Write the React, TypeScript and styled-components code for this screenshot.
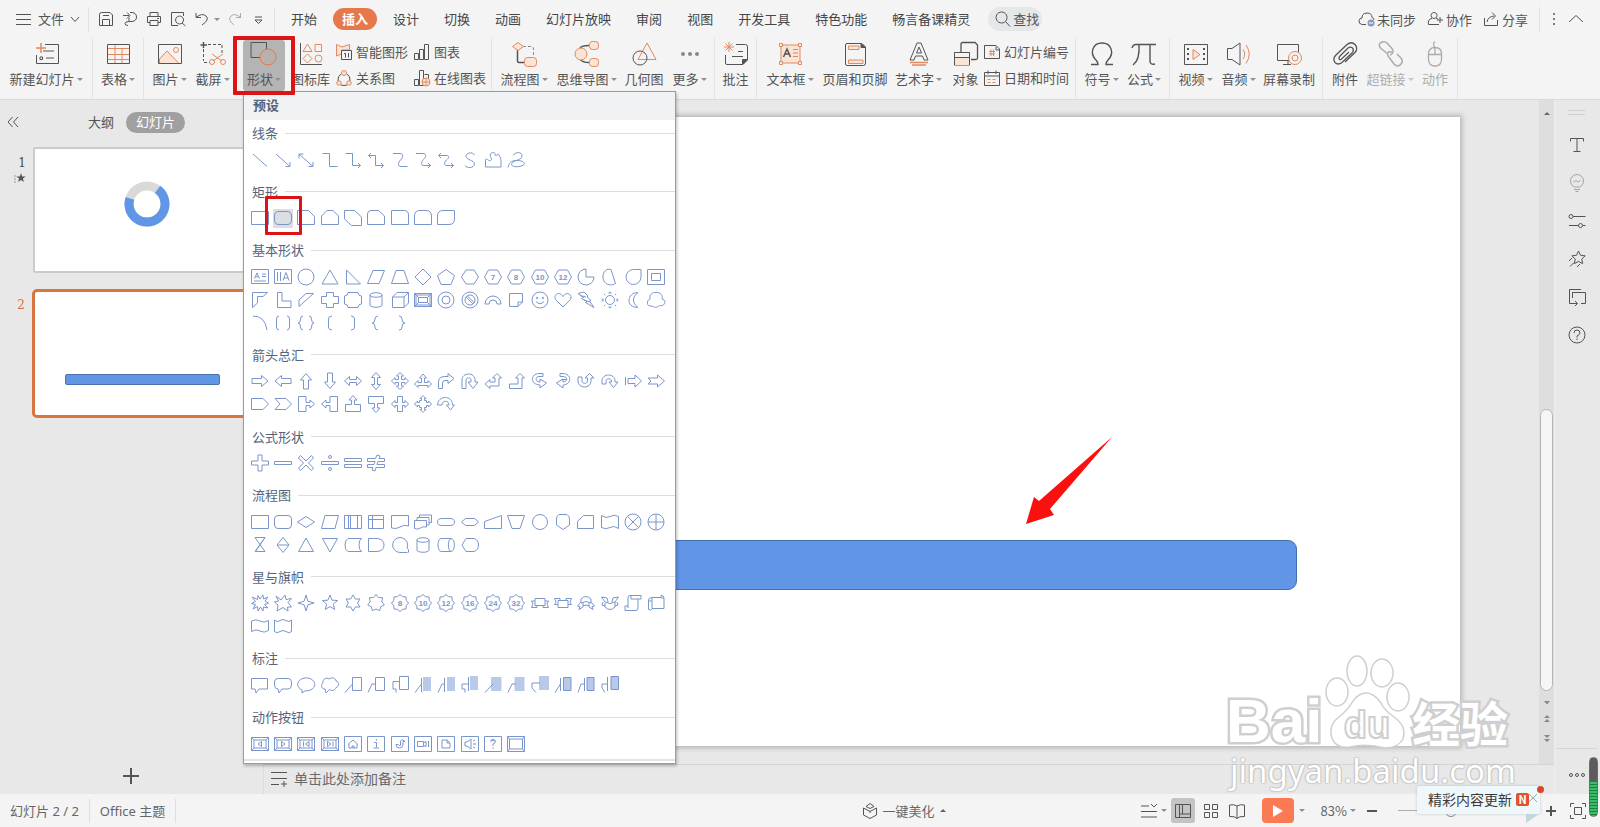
import React from 'react';
import styled, { createGlobalStyle, css } from 'styled-components';

const GlobalStyle = createGlobalStyle`
  * { box-sizing: border-box; }
  body { margin: 0; overflow: hidden; }
  body, button, input { font-family: "Noto Sans CJK SC", "Noto Sans", sans-serif; }
  button { border: 0; padding: 0; background: none; color: inherit; font-size: inherit; cursor: pointer; }
  h2, h3, p, ol { margin: 0; padding: 0; font-weight: 400; }
`;

const INK = '#545456';
const ORANGE = '#e2895f';
const PALE = '#fbe3d6';
const BLUE = '#7a96cc';
const RED = '#dc1418';

/* ---------- page frame ---------- */

const Page = styled.div`
  position: relative;
  display: flex;
  flex-direction: column;
  height: 100vh;
  font-size: 13px;
  line-height: 20px;
  color: ${INK};
  background: #e8e8e8;
`;

const Svg = styled.svg`
  display: block;
  flex: none;
  overflow: visible;
  fill: none;
  stroke: ${INK};
`;

const Caret = styled.span<{ $up?: boolean }>`
  flex: none;
  width: 0;
  height: 0;
  border: 3px solid transparent;
  ${(p) => (p.$up ? 'border-bottom-color: #666; border-top-width: 0;' : 'border-top-color: #909090; border-bottom-width: 0;')}
`;

/* ---------- menu bar ---------- */

const MenuBar = styled.header`
  display: flex;
  align-items: center;
  height: 38px;
  flex: none;
  background: #f4f4f4;
  white-space: nowrap;
`;

const FileButton = styled.button`
  display: flex;
  align-items: center;
  gap: 6px;
  padding: 0 8px 0 16px;
  line-height: 20px;
`;

const Rule = styled.span`
  width: 1px;
  height: 25px;
  flex: none;
  background: #e2e2e2;
`;

const QuickTools = styled.div`
  display: flex;
  align-items: center;
  gap: 8px;
  padding: 0 8px 0 9px;
`;

const QuickButton = styled.button`
  display: flex;
  align-items: center;
  gap: 4px;
`;

const Tabs = styled.nav`
  display: flex;
  align-items: center;
  gap: 7px;
  padding-left: 7px;
`;

const Tab = styled.button<{ $active?: boolean }>`
  height: 22px;
  padding: 0 9px;
  border-radius: 11px;
  line-height: 22px;
  color: #464648;
  ${(p) => p.$active && css`background: #e6794a; color: #fff; font-weight: 700;`}
`;

const Search = styled.label`
  display: flex;
  align-items: center;
  gap: 2px;
  width: 54px;
  height: 24px;
  margin-left: 9px;
  padding-left: 7px;
  border-radius: 12px;
  background: #e6e7e9;
`;

const SearchInput = styled.input`
  width: 30px;
  padding: 0;
  border: 0;
  background: none;
  font-size: 13px;
  line-height: 20px;
  &::placeholder { color: ${INK}; opacity: 1; }
`;

const AccountTools = styled.div`
  display: flex;
  align-items: center;
  gap: 11px;
  margin-left: auto;
  padding-right: 16px;
`;

const AccountButton = styled.button`
  display: flex;
  align-items: center;
  gap: 3px;
`;

/* ---------- ribbon ---------- */

const Ribbon = styled.section`
  display: flex;
  height: 62px;
  flex: none;
  background: #f4f4f4;
  border-bottom: 1px solid #dadada;
  white-space: nowrap;
`;

const Group = styled.div<{ $pad?: number }>`
  display: flex;
  height: 61px;
  padding: 2px ${(p) => p.$pad ?? 0}px 8px;
  border-right: 1px solid #e4e4e4;
`;

const ToolButton = styled.button<{ $w: number; $dim?: boolean }>`
  display: flex;
  flex-direction: column;
  align-items: center;
  flex: none;
  width: ${(p) => p.$w}px;
  height: 51px;
  padding-top: 1px;
  gap: 2px;
  opacity: ${(p) => (p.$dim ? 0.45 : 1)};
`;

const ToolLabel = styled.span`
  display: flex;
  align-items: center;
  gap: 2px;
  line-height: 20px;
`;

const ShapeAnchor = styled.div`
  position: relative;
  width: 42px;
  margin-left: 9px;
  border-radius: 3px;
  background: #b4b4b4;
  height: 51px;
`;

const Highlight = styled.span<{ $inset: string; $b: number }>`
  position: absolute;
  z-index: 6;
  inset: ${(p) => p.$inset};
  border: ${(p) => p.$b}px solid ${RED};
  border-radius: 1px;
  pointer-events: none;
`;

const SmallColumn = styled.div<{ $w: number }>`
  display: flex;
  flex-direction: column;
  gap: 6px;
  width: ${(p) => p.$w}px;
  padding-top: 2px;
`;

const SmallButton = styled.button`
  display: flex;
  align-items: center;
  gap: 4px;
  line-height: 20px;
`;

/* ---------- shape menu ---------- */

const ShapeMenu = styled.div`
  position: absolute;
  z-index: 5;
  top: 51px;
  left: 0;
  display: flex;
  flex-direction: column;
  width: 433px;
  height: 673px;
  border: 1px solid #9b9c9f;
  background: #fff;
  box-shadow: 1px 2px 3px rgba(0, 0, 0, 0.25);
  color: #56637c;
  cursor: default;
`;

const MenuTitle = styled.h2`
  height: 28px;
  padding-left: 9px;
  background: #f1f2f4;
  font-size: 13px;
  font-weight: 700;
  line-height: 25px;
`;

const SectionList = styled.div`
  display: flex;
  flex-direction: column;
  justify-content: space-between;
  flex: 1;
  padding-bottom: 4px;
  margin-bottom: 2px;
  border-bottom: 2px solid #e3e4e6;
`;

const SectionTitle = styled.h3`
  display: flex;
  align-items: center;
  gap: 7px;
  height: 26px;
  margin-bottom: 2px;
  padding-left: 8px;
  font-size: 13px;
  &::after { content: ""; flex: 1; height: 1px; background: #dcdddf; }
`;

const ShapeGrid = styled.div`
  display: grid;
  grid-template-columns: repeat(18, 1fr);
  width: 420px;
  margin-left: 4px;
`;

const ShapeCell = styled.button<{ $on?: boolean }>`
  position: relative;
  display: flex;
  align-items: center;
  justify-content: center;
  height: 23px;
  ${(p) => p.$on && css`background: #dcdee4; background-clip: content-box; padding: 2px;`}
`;

const GlyphSvg = styled.svg`
  display: block;
  flex: none;
  overflow: visible;
  fill: none;
  stroke: ${BLUE};
  stroke-width: 1;
`;

const GlyphText = styled.text`
  fill: ${BLUE};
  stroke: none;
  font-family: "Liberation Sans", sans-serif;
  font-size: 8px;
  font-weight: 700;
  text-anchor: middle;
`;

interface Glyph { d: string; f?: string; t?: string; }

const star = (n: number, r1: number, r2: number, cx = 9, cy = 9): string => {
  const pts: string[] = [];
  for (let i = 0; i < n * 2; i += 1) {
    const r = i % 2 ? r2 : r1;
    const a = (Math.PI * i) / n - Math.PI / 2;
    pts.push(`${(cx + r * Math.cos(a)).toFixed(2)} ${(cy + r * Math.sin(a)).toFixed(2)}`);
  }
  return `M${pts.join('L')}Z`;
};
const ring = (r: number, cx = 9, cy = 9) => `M${cx - r} ${cy}a${r} ${r} 0 1 0 ${2 * r} 0a${r} ${r} 0 1 0 ${-2 * r} 0Z`;
const HEX = 'M4.5 2H13.5L17.5 9L13.5 16H4.5L.5 9Z';
const FRAME = 'M.5 2.5H17.5V15.5H.5Z';
const BEVEL = 'M.5 2.5H17.5V15.5H.5ZM3 5H15V13H3ZM.5 2.5L3 5M17.5 2.5L15 5M.5 15.5L3 13M17.5 15.5L15 13';
const BUTTON = 'M.5 1.5H17.5V16.5H.5Z';
const BADGE = star(8, 8.5, 6.8);
const g = (...list: (string | Glyph)[]): Glyph[] => list.map((x) => (typeof x === 'string' ? { d: x } : x));

const sections: { title: string; shapes: Glyph[] }[] = [
  {
    title: '线条',
    shapes: g(
      'M2 3L16 15.5',
      'M2 3L16 15.5M16 11V15.5H11.5',
      'M2 3L16 15.5M16 11V15.5H11.5M2 7.5V3H6.5',
      'M1.5 2.5H8.5V15.5H16.5',
      'M1.5 2.5H8.5V14.5H16.5M14 12L16.5 14.5L14 17',
      'M1.5 4.5H8.5V14.5H16.5M14 12L16.5 14.5L14 17M4 2L1.5 4.5L4 7',
      'M2 2.5H9C13 2.5 12 6.5 9.5 9C7 11.5 6.5 15.5 10 15.5H16.5',
      'M2 2.5H9C13 2.5 12 6 9.5 8.5C7 11 6.5 14.5 10 14.5H16.5M14 12L16.5 14.5L14 17',
      'M2 4.5H9C13 4.5 12 7 9.5 9C7 11.5 6.5 14.5 10 14.5H16.5M14 12L16.5 14.5L14 17M4 2L1.5 4.5L4 7',
      'M13.5 4C11.5 .5 5 1.5 5 5.5C5.5 9 13 9 13.5 13C13 17.5 5.5 17.5 4 14.5',
      'M1.5 16V8.5C3 6.5 4 10.5 6.5 9.5C9.5 8 5 6 6.5 3C8 .5 11.5 1.5 11 3C10.5 5 13 5 14 3C15 3 17 8 17 9.5V16Z',
      'M1 16.5C2 12 4.5 9.5 9 9.5C19 9.5 20 14.5 12 15.5C6 16.5 3 14 5.5 11.5C8 9 15 9 15 5C15 0 8 1 6 4.5',
    ),
  },
  {
    title: '矩形',
    shapes: g(
      FRAME,
      'M5 2.5H13Q17.5 2.5 17.5 7V11Q17.5 15.5 13 15.5H5Q.5 15.5 .5 11V7Q.5 2.5 5 2.5Z',
      'M.5 1.5H11.5L17.5 7.5V15.5H.5Z',
      'M6 1.5H12L17.5 7V15.5H.5V7Z',
      'M.5 1.5H10.5L17.5 8V16.5H7.5L.5 10Z',
      'M4 1.5H11.5L17.5 7V15.5H.5V5Q.5 1.5 4 1.5Z',
      'M.5 1.5H13Q17.5 1.5 17.5 6V15.5H.5Z',
      'M6 1.5H12Q17.5 1.5 17.5 7V15.5H.5V7Q.5 1.5 6 1.5Z',
      'M6 1.5H17.5V10Q17.5 15.5 12 15.5H.5V7Q.5 1.5 6 1.5Z',
    ),
  },
  {
    title: '基本形状',
    shapes: g(
      'M.5 1.5H17.5V15.5H.5ZM11 6H15M11 8.5H15M3 13H15M3.5 10.5L6 5L8.5 10.5M4.5 8.8H7.5',
      'M.5 1.5H17.5V15.5H.5ZM3.5 4V13M6.5 4V13M9 12.5L12 4.5L15 12.5M10 10H14',
      ring(8),
      'M9 2L17 16H1Z',
      'M2.5 2L16.5 16H2.5Z',
      'M6 2.5H17.5L12 15.5H.5Z',
      'M5 2.5H13L17.5 15.5H.5Z',
      'M9 1L17 9L9 17L1 9Z',
      'M9 1.5L17.5 7.5L14 16.5H4L.5 7.5Z',
      'M5 2H13L17.5 9L13 16H5L.5 9Z',
      { d: HEX, t: '7' }, { d: HEX, t: '8' }, { d: HEX, t: '10' }, { d: HEX, t: '12' },
      'M9 1A8 8 0 1 0 17 9H9Z',
      'M6 1.5C1 4 .5 12 5 15.5C9 18 13 16.5 14.5 15.5L10 1.5Q8 1 6 1.5Z',
      'M17 1.5V9A7.5 7.5 0 1 1 9.5 1.5Z',
      'M.5 1.5H17.5V16.5H.5ZM4.5 5.5H13.5V12.5H4.5Z',
      'M1.5 1.5H16.5L12 5.5H6.5V12L1.5 16.5Z',
      'M3.5 1.5H8V10H17V16.5H3.5Z',
      'M9 2.5H16.5L2 15.5V9Z',
      'M5.5 1.5H12.5V5.5H17.5V12.5H12.5V16.5H5.5V12.5H.5V5.5H5.5Z',
      'M4 1.5H14Q14 5 17.5 5V13Q14 13 14 16.5H4Q4 13 .5 13V5Q4 5 4 1.5Z',
      'M3 4C3 1 15 1 15 4V14C15 17 3 17 3 14ZM3 4C3 7 15 7 15 4',
      'M1.5 6L6 1.5H17.5V12L13 16.5H1.5ZM1.5 6H13V16.5M13 6L17.5 1.5',
      'M.5 2.5H17.5V15.5H.5ZM4.5 6.5H13.5V11.5H4.5ZM2 4H16V14H2ZM.5 2.5L4.5 6.5M17.5 2.5L13.5 6.5M.5 15.5L4.5 11.5M17.5 15.5L13.5 11.5',
      ring(8) + ring(4),
      ring(8) + ring(5) + 'M5 6L12 13M6.5 5L13.5 12',
      'M1 13A8 8 0 0 1 17 13H13A4 4 0 0 0 5 13Z',
      'M2.5 2.5H15.5V11L11 15.5H2.5ZM11 15.5V11H15.5',
      ring(8) + 'M5 10.5Q9 15 13 10.5' + ring(0.8, 6, 7) + ring(0.8, 12, 7),
      'M9 16L1.5 8.5C-1 3 6 0 9 5.5C12 0 19 3 16.5 8.5Z',
      'M1 2.5L7 1L11 5L10 6L14 9.5L12.5 10L17 16.5L8.5 11.5L10 10.5L4.5 7.5L6.5 6.5ZM3 4.5L9 6M7 9L13 11',
      ring(4.5) + 'M9 .5V2M9 16V17.5M.5 9H2M16 9H17.5M2.8 2.8L4.2 4.2M13.8 13.8L15.2 15.2M2.8 15.2L4.2 13.8M13.8 4.2L15.2 2.8M7.5 2H10.5M7.5 16H10.5M2 7.5V10.5M16 7.5V10.5',
      'M14 1.5C3 1.5 1 16.5 14 16.5C8 12 8 6 14 1.5Z',
      'M5 15C-1 16-.5 9 3 8C2 3 6 1 9 1.5C14 1 16 5 15 8C20 9 18 16 12.5 14.5C10 17 7 16.5 5 15Z',
      'M2 2Q14 2 16 16',
      'M5 2Q2.5 2 2.5 5V13Q2.5 16 5 16M13 2Q15.5 2 15.5 5V13Q15.5 16 13 16',
      'M6 2Q3.5 2 3.5 5Q3.5 9 1 9Q3.5 9 3.5 13Q3.5 16 6 16M12 2Q14.5 2 14.5 5Q14.5 9 17 9Q14.5 9 14.5 13Q14.5 16 12 16',
      'M11 2Q7.5 2 7.5 5V13Q7.5 16 11 16',
      'M7 2Q10.5 2 10.5 5V13Q10.5 16 7 16',
      'M11 2Q8 2 8 5Q8 9 5 9Q8 9 8 13Q8 16 11 16',
      'M8 2Q11 2 11 5Q11 9 14 9Q11 9 11 13Q11 16 8 16',
    ),
  },
  {
    title: '箭头总汇',
    shapes: g(
      'M1 6.5H10.5V3.5L17 9L10.5 14.5V11.5H1Z',
      'M17 6.5H7.5V3.5L1 9L7.5 14.5V11.5H17Z',
      'M6.5 17V8H3.5L9 1.5L14.5 8H11.5V17Z',
      'M6.5 1V10H3.5L9 16.5L14.5 10H11.5V1Z',
      'M.5 9L5.5 4.5V7.5H12.5V4.5L17.5 9L12.5 13.5V10.5H5.5V13.5Z',
      'M9 .5L13.5 5.5H10.5V12.5H13.5L9 17.5L4.5 12.5H7.5V5.5H4.5Z',
      'M9 .5L12.5 4H10.5V7.5H14V5.5L17.5 9L14 12.5V10.5H10.5V14H12.5L9 17.5L5.5 14H7.5V10.5H4V12.5L.5 9L4 5.5V7.5H7.5V4H5.5Z',
      'M9 2L12.5 6H10.5V10.5H14V8.5L17.5 12L14 15.5V13.5H4V15.5L.5 12L4 8.5V10.5H7.5V6H5.5Z',
      'M1.5 16.5V10Q1.5 4.5 8 4.5H11V1.5L17 6.5L11 11.5V8.5H8Q5.5 8.5 5.5 11V16.5Z',
      'M1 16.5V8C1 0 14 0 14 8V10H17L12 16.5L7 10H10V8C10 5 5 5 5 8V16.5Z',
      'M13 1.5L17.5 6H15V14H6V16.5L1 12L6 7.5V10H11V6H8.5Z',
      'M13 1.5L17.5 6H15V16.5H2.5V12H11V6H8.5Z',
      'M12 1.5H8C-1 2 -1 12.5 9 13V16L15.5 11L9 7V10C4 10 4 4.5 8 4.5H12Z',
      'M6 1.5H9C18 2 18 12.5 9 13V16L2.5 11L9 7V10C14 10 14 4.5 9 4.5H6ZM7 7.5H13',
      'M1 5V9C1 17 14 17 14 9V6H17L12.5 1.5L8 6H10.5V9C10.5 12 5 12 5 9V5Z',
      'M1 12V9C1 1 14 1 14 9V10H17L12.5 15.5L8 10H10.5V9C10.5 6 5 6 5 9V12Z',
      'M1.5 5V13M4 6.5H11V3L17.5 9L11 15V11.5H4Z',
      'M1 6H10.5V3L17.5 9L10.5 15V12H1L4 9Z',
      'M.5 3.5H12L17.5 9L12 14.5H.5Z',
      'M1 3.5H12L17.5 9L12 14.5H1L6 9Z',
      'M1.5 1.5H9V7.5H13V5L17.5 9L13 13V10.5H9V16.5H1.5Z',
      'M16.5 1.5H9V7.5H5V5L.5 9L5 13V10.5H9V16.5H16.5Z',
      'M1.5 16.5V9.5H7.5V5H5L9 .5L13 5H10.5V9.5H16.5V16.5Z',
      'M1.5 1.5V8.5H7.5V13H5L9 17.5L13 13H10.5V8.5H16.5V1.5Z',
      'M6.5 1.5H11.5V7.5H14V5.5L17.5 9L14 12.5V10.5H11.5V16.5H6.5V10.5H4V12.5L.5 9L4 5.5V7.5H6.5Z',
      'M9 .5L12 3.5H10.5V5.5H12.5V7.5H14.5V6L17.5 9L14.5 12V10.5H12.5V12.5H10.5V14.5H12L9 17.5L6 14.5H7.5V12.5H5.5V10.5H3.5V12L.5 9L3.5 6V7.5H5.5V5.5H7.5V3.5H6Z',
      'M.5 10C1 0 15.5 0 15.5 10H17.5L13.5 15L9.5 10H12C12 5 5 5 5 10Z',
    ),
  },
  {
    title: '公式形状',
    shapes: g(
      'M7 1H11V7H17.5V11H11V17H7V11H.5V7H7Z',
      'M.5 7.5H17.5V10.5H.5Z',
      'M3.5 1.5L9 7L14.5 1.5L16.5 4L11.5 9L16.5 14L14.5 16.5L9 11L3.5 16.5L1.5 14L6.5 9L1.5 4Z',
      'M.5 7.5H17.5V10.5H.5Z' + ring(1.5, 9, 3) + ring(1.5, 9, 15),
      'M.5 4.5H17.5V7.5H.5ZM.5 10.5H17.5V13.5H.5Z',
      'M.5 4.5H8.5L10 1L13 2L12 4.5H17.5V7.5H11L10 10.5H17.5V13.5H9L8 17L5 16L6 13.5H.5V10.5H7L8 7.5H.5Z',
    ),
  },
  {
    title: '流程图',
    shapes: g(
      FRAME,
      'M4 2.5H14Q17.5 2.5 17.5 6V12Q17.5 15.5 14 15.5H4Q.5 15.5 .5 12V6Q.5 2.5 4 2.5Z',
      'M9 3.5L17.5 9L9 14.5L.5 9Z',
      'M4 2.5H17.5L14 15.5H.5Z',
      FRAME + 'M4.5 2.5V15.5M13.5 2.5V15.5M6.5 2.5V15.5',
      'M1.5 2.5H16.5V15.5H1.5ZM5.5 2.5V15.5M1.5 6.5H16.5',
      'M.5 2.5H17.5V13Q13 11 9 14Q5 16.5 .5 15Z',
      'M.5 7.5H12.5V14Q9 13 6.5 15Q3 17 .5 15.5ZM3 7V4.5H15V12H12.5M5.5 4V2H17.5V9.5H15',
      'M5 5.5H13Q17.5 5.5 17.5 9T13 12.5H5Q.5 12.5 .5 9T5 5.5Z',
      'M4.5 5.5H13.5L17.5 9L13.5 12.5H4.5L.5 9Z',
      'M.5 8.5L17.5 2.5V15.5H.5Z',
      'M.5 2.5H17.5L13 15.5H5Z',
      ring(7.5),
      'M5 1.5H13Q15.5 3 15.5 6V12L9 16.5L2.5 12V6Q2.5 3 5 1.5Z',
      'M6.5 2.5H16.5V15.5H.5V8.5Z',
      'M.5 2.5Q5 6 9 3.5Q13 1 17.5 3.5V15.5Q13 12 9 14.5Q5 17 .5 14.5Z',
      ring(8) + 'M3.5 3.5L14.5 14.5M14.5 3.5L3.5 14.5',
      ring(8) + 'M9 1V17M1 9H17',
      'M4 1.5H14L4.5 15.5H14L4 1.5M14 1.5L4 15.5',
      'M9 1.5L15 9L9 16.5L3 9ZM3 9H15',
      'M9 2L16.5 15.5H1.5Z',
      'M1.5 2.5H16.5L9 16Z',
      'M4 2.5H17.5Q15 4 15 9T17.5 15.5H4Q1 14 1 9T4 2.5Z',
      'M1.5 2.5H10Q17 3 17 9T10 15.5H1.5Z',
      'M16.5 16.5H9A7.5 7.5 0 1 1 16 12L17.5 13.5V16.5',
      'M3 4C3 1 15 1 15 4V14C15 17 3 17 3 14ZM3 4C3 7 15 7 15 4',
      'M4 2.5H14C18.5 3 18.5 15 14 15.5H4C0 15 0 3 4 2.5ZM14 2.5C10.5 3 10.5 15 14 15.5',
      'M5 2.5H13Q17.5 4 17.5 9T13 15.5H5L1 9Z',
    ),
  },
  {
    title: '星与旗帜',
    shapes: g(
      'M9 5L12 1L12.5 5L17 3L14 7L17.5 9L13.5 10.5L17 14L12.5 13L12 17L9.5 13L7 17L6.5 12.5L2 15L4.5 10.5L.5 9.5L4.5 7.5L1 3L6.5 5.5L7 1.5Z',
      'M7 6L11 1L12 5.5L17.5 4.5L14 8.5L17.5 13L13.5 13L14 17L9 13.5L3 17L4 11L.5 8L4.5 7L2 2Z',
      star(4, 8, 2.6), star(5, 8, 3.5), star(6, 8, 4.6), star(7, 8.5, 6),
      { d: BADGE, t: '8' }, { d: BADGE, t: '10' }, { d: BADGE, t: '12' },
      { d: BADGE, t: '16' }, { d: BADGE, t: '24' }, { d: BADGE, t: '32' },
      'M4 4.5H14V11.5H4ZM4 7H.5L2 10L.5 13.5H6V11.5M14 7H17.5L16 10L17.5 13.5H12V11.5',
      'M4 6.5H14V13.5H4ZM6 6.5V4.5H.5L2 8L.5 10.5H4M12 6.5V4.5H17.5L16 8L17.5 10.5H14',
      'M4 9V5Q9 0 14 5V9Q9 6 4 9ZM4 8L.5 12L3 12.5L2 15.5L6 13V9M14 8L17.5 12L15 12.5L16 15.5L12 13V9M6 12Q9 10 12 12',
      'M4 9V13Q9 18 14 13V8Q9 11 4 8L.5 3L6 4L7 8M14 8L17.5 3L12 4L11 8M4 12L1 11L2 8M14 12L17 11L16 8',
      'M4 12V4Q4 1.5 6 1.5H17V5H14V14Q14 16.5 12 16.5H1V12H4V14M7 1.5V5H14',
      'M5 3.5H14V1.5Q17 1 17 4.5V14.5H5V15Q4 17 1.5 15.5V6Q1.5 4 5 3.5ZM5 4V14M1.5 7H5M14 3.5Q16 5 17 4',
      'M.5 4Q5 1.5 9 4Q13 6.5 17.5 3.5V13.5Q13 16.5 9 14Q5 11.5 .5 14.5Z',
      'M.5 3Q3 6 6 3.5Q9 1.5 12 3.5Q15 6 17.5 3V14.5Q15 17 12 14.5Q9 12.5 6 14.5Q3 17 .5 14.5Z',
    ),
  },
  {
    title: '标注',
    shapes: g(
      'M.5 2.5H16.5V13H8L5 17L4 13H.5Z',
      'M4 2.5H14Q17.5 2.5 17.5 6V9Q17.5 13 14 13H8L5 17L4 13Q.5 13 .5 9V6Q.5 2.5 4 2.5Z',
      'M5 14A8.5 6.5 0 1 1 8 14.8L5 17Z',
      'M4 13C-.5 13 0 8 2 7C1 3 6 1 8 3C11 1 15 2 15 5C19 6 18 11 15 11.5C14 15 10 15 8.5 13.5L5 17Z',
      'M8.5 1.5H17.5V14.5H8.5V1.5M8.5 8L1 16.5',
      'M8.5 1.5H17.5V14.5H8.5V1.5M8.5 8H5L1 16.5',
      'M8.5 .5H17.5V13.5H8.5V.5M8.5 5.5H2V13H5V16.5',
      { d: 'M7.5 2V16M7.5 8L1 16.5', f: 'M9 1H17V15H9Z' },
      { d: 'M7.5 2V16M7.5 8H5L1 16.5', f: 'M10 1H18V15H10Z' },
      { d: 'M7.5 1V15M7.5 8H1V13H4V16.5', f: 'M9 0H17V14H9Z' },
      { d: 'M9 8L1 16.5', f: 'M7 1H17.5V15H7Z' },
      { d: 'M9 8H5L1 16.5', f: 'M7.5 1H17.5V15H7.5Z' },
      { d: 'M9 7H1V12L5 16.5', f: 'M8 0H18V14H8Z' },
      { d: 'M6.5 2V15M6.5 8L1 16.5M9.5 1.5H17V14.5H9.5Z', f: 'M10 2H17V14H10Z' },
      { d: 'M7.5 2V15M7.5 8H4L1 16.5M10 1.5H17V14.5H10Z', f: 'M10 2H17V14H10Z' },
      { d: 'M6.5 1V15M6.5 8H1V12L4 16.5M10 .5H17.5V13.5H10Z', f: 'M10 1H17V13H10Z' },
    ),
  },
  {
    title: '动作按钮',
    shapes: g(
      BEVEL + 'M10.5 6.5V11.5L7 9Z',
      BEVEL + 'M7.5 6.5V11.5L11 9Z',
      BEVEL + 'M12 6.5V11.5L8.5 9ZM6.5 6.5V11.5',
      BEVEL + 'M6.5 6.5V11.5L10 9ZM12 6.5V11.5',
      BUTTON + 'M4 9.5L9 5L14 9.5M5 9V13H13V9M8 13V11H10V13',
      BUTTON + 'M7 7.5H9.5V12.5M6.5 13H12M9.5 4V5.5',
      BUTTON + 'M9 6.5L11 4.5L14 6.5H12V10Q12 13 8.5 13Q5 13 5 9.5H7.5Q8 11 9.5 10.5V6.5Z',
      BUTTON + 'M3.5 6.5H9.5V11.5H3.5ZM9.5 8L12 6.5V11.5L9.5 10.5M14.5 6V12',
      BUTTON + 'M5 5H10L13 8V13H5ZM10 5V8H13',
      BUTTON + 'M4 7H6L10 4V14L6 11H4ZM12 6L14 5M12 9H15M12 12L14 13',
      BUTTON + 'M6.5 6.5Q6.5 4.5 9 4.5T11.5 6.5Q11.5 8 9 9V11M9 12.5V14M7.5 6.5Q7.5 5.5 9 5.5T10.5 6.5',
      BUTTON + 'M2.5 4H15.5V14H2.5ZM.5 1.5L2.5 4M17.5 1.5L15.5 4M.5 16.5L2.5 14M17.5 16.5L15.5 14',
    ),
  },
];

/* ---------- workspace ---------- */

const Workspace = styled.main`
  display: flex;
  flex: 1;
  min-height: 0;
`;

const Outline = styled.aside`
  display: flex;
  flex-direction: column;
  width: 263px;
  flex: none;
`;

const OutlineHead = styled.div`
  display: flex;
  align-items: center;
  height: 47px;
  padding: 0 0 3px 7px;
`;

const OutlineTab = styled.button<{ $on?: boolean; $gap: number }>`
  height: 21px;
  margin-left: ${(p) => p.$gap}px;
  line-height: 20px;
  ${(p) => p.$on && css`padding: 0 10px; border-radius: 11px; background: #a0a0a0; color: #fff;`}
`;

const SlideList = styled.ol`
  display: flex;
  flex-direction: column;
  gap: 16px;
  flex: 1;
  list-style: none;
`;

const SlideItem = styled.li`
  display: flex;
`;

const SlideNumber = styled.div<{ $on?: boolean }>`
  display: flex;
  flex-direction: column;
  align-items: flex-end;
  width: ${(p) => (p.$on ? 32 : 33)}px;
  padding: 7px 7px 0 0;
  font-family: "DejaVu Serif", serif;
  font-size: 12px;
  line-height: 19px;
  color: ${(p) => (p.$on ? '#d9703c' : '#4b4b4d')};
`;

const Thumb = styled.button<{ $on?: boolean }>`
  box-sizing: content-box;
  position: relative;
  display: flex;
  align-items: center;
  width: 222px;
  height: ${(p) => (p.$on ? 123 : 122)}px;
  border: ${(p) => (p.$on ? '3px solid #d8763f' : '2px solid #cbcbcb')};
  border-radius: ${(p) => (p.$on ? 5 : 2)}px;
  background: #fff;
`;

const Donut = styled(Svg)`
  margin: 0 0 12px 89px;
`;

const ThumbBar = styled.span`
  position: absolute;
  left: 30px;
  top: 82px;
  width: 155px;
  height: 11px;
  border: 1px solid #4a72ad;
  border-radius: 2px;
  background: #6196e6;
`;

const AddSlide = styled.button`
  align-self: center;
  margin: 0 2px 9px 0;
`;

const Editor = styled.section`
  display: flex;
  flex-direction: column;
  flex: 1;
  min-width: 0;
`;

const StageRow = styled.div`
  display: flex;
  flex: 1;
  min-height: 0;
`;

const Stage = styled.div`
  display: flex;
  flex: 1;
  padding: 17px 79px 18px 80px;
`;

const SlideCanvas = styled.div`
  position: relative;
  flex: 1;
  background: #fff;
  box-shadow: 0 0 5px 2px rgba(0, 0, 0, 0.22);
`;

const SlideShape = styled.div`
  position: absolute;
  left: 14%;
  top: 67.3%;
  width: 71.4%;
  height: 50px;
  border: 1px solid #416fae;
  border-radius: 9px;
  background: #6196e6;
`;

const Pointer = styled.svg`
  position: absolute;
  left: 61%;
  top: 50.7%;
`;

const ScrollBar = styled.div`
  display: flex;
  flex-direction: column;
  align-items: center;
  width: 15px;
  flex: none;
  padding: 12px 0 11px;
  background: #dedede;
`;

const ScrollThumb = styled.span`
  width: 13px;
  height: 282px;
  margin: auto 0 8px;
  border: 1px solid #b5b5b5;
  border-radius: 7px;
  background: #f6f6f6;
`;

const Notes = styled.label`
  display: flex;
  align-items: center;
  gap: 6px;
  height: 30px;
  flex: none;
  padding: 0 0 3px 6px;
  border-top: 1px solid #d6d6d6;
  border-left: 1px solid #dcdcdc;
`;

const NotesInput = styled.input`
  flex: 1;
  padding: 0;
  border: 0;
  background: none;
  font-size: 14px;
  line-height: 20px;
  &::placeholder { color: #6b6b6d; opacity: 1; }
`;

const SideBar = styled.aside`
  display: flex;
  flex-direction: column;
  align-items: center;
  width: 46px;
  flex: none;
  padding-right: 2px;
  border-left: 1px solid #eeeeee;
`;

const SideHandle = styled.span`
  width: 17px;
  height: 5px;
  margin: 10px 0 11px;
  border: solid #cfcfcf;
  border-width: 1px 0;
`;

const SideButton = styled.button`
  display: flex;
  align-items: center;
  justify-content: center;
  width: 30px;
  height: 38px;
`;

const SideMore = styled.button`
  display: flex;
  align-items: center;
  justify-content: center;
  width: 40px;
  height: 46px;
  margin-top: auto;
  padding-top: 6px;
  border-top: 1px solid #d6d6d6;
`;

/* ---------- status bar ---------- */

const StatusBar = styled.footer`
  display: flex;
  align-items: center;
  height: 33px;
  flex: none;
  background: #f4f4f4;
  white-space: nowrap;
  color: #666668;
`;

const StatusText = styled.span`
  padding: 0 10px;
  border-right: 1px solid #dedede;
  font-family: "Noto Sans", "Noto Sans CJK SC", sans-serif;
  line-height: 24px;
`;

const Beautify = styled.button`
  display: flex;
  align-items: center;
  gap: 5px;
  margin: 0 194px 0 auto;
`;

const ViewTools = styled.div`
  display: flex;
  align-items: center;
  gap: 10px;
  padding-right: 14px;
`;

const ViewButton = styled.button<{ $on?: boolean }>`
  display: flex;
  align-items: center;
  justify-content: center;
  gap: 3px;
  height: 25px;
  ${(p) => p.$on && css`width: 24px; margin: 0 -2px 0 -6px; border-radius: 3px; background: #c4c4c4;`}
`;

const FitButton = styled(ViewButton)`
  margin-left: 3px;
`;

const PlayGroup = styled.div`
  display: flex;
  align-items: center;
  gap: 5px;
  margin: 0 6px 0 7px;
`;

const PlayButton = styled.button`
  display: flex;
  align-items: center;
  justify-content: center;
  width: 32px;
  height: 25px;
  border-radius: 4px;
  background: #fb7a53;
`;

const ZoomRange = styled.input`
  appearance: none;
  width: 147px;
  height: 12px;
  margin: 0;
  background: linear-gradient(#aeaeae, #aeaeae) center / 127px 1px no-repeat;
  &::-webkit-slider-thumb {
    appearance: none;
    width: 12px;
    height: 12px;
    border: 1px solid #888;
    border-radius: 50%;
    background: #f4f4f4;
  }
`;

const Toast = styled.div`
  position: absolute;
  z-index: 8;
  right: 60px;
  bottom: 13px;
  display: flex;
  align-items: center;
  gap: 4px;
  width: 123px;
  height: 28px;
  padding: 0 0 2px 11px;
  border-radius: 2px;
  background: #eef8fb;
  box-shadow: 0 0 3px rgba(90, 120, 130, 0.35);
  font-size: 14px;
  white-space: nowrap;
  color: #3a3a3c;
  &::after {
    content: "";
    position: absolute;
    right: 1px;
    top: 28px;
    border: solid transparent;
    border-width: 9px 13px 0 0;
    border-top-color: #c3d6dc;
  }
`;

const ToastBadge = styled.span`
  width: 13px;
  height: 13px;
  border-radius: 2px;
  background: #e0522f;
  color: #fff;
  font-size: 11px;
  font-weight: 700;
  line-height: 13px;
  text-align: center;
`;

const ToastClose = styled.button`
  position: absolute;
  right: 1px;
  top: 6px;
`;

const ToastDot = styled.span`
  position: absolute;
  right: -4px;
  top: 0;
  width: 7px;
  height: 7px;
  border-radius: 50%;
  background: #d9472b;
`;

const Gauge = styled.div`
  position: absolute;
  z-index: 8;
  right: 2px;
  bottom: 10px;
  width: 9px;
  height: 60px;
  border: 1px solid #6b6b6b;
  border-radius: 5px;
  background: linear-gradient(#5c5c5c 24px, transparent 24px), repeating-linear-gradient(#38c068 0 2px, #1d7c40 2px 3px);
`;

/* ---------- watermark ---------- */

const Watermark = styled.div`
  position: absolute;
  z-index: 4;
  right: 88px;
  bottom: 34px;
  display: flex;
  flex-direction: column;
  width: 286px;
  color: #fff;
  text-shadow: 0 0 2px #aaa, 0 0 2px #bbb, 0 0 1px #bbb;
  pointer-events: none;
  white-space: nowrap;
`;

const WatermarkLogo = styled.div`
  display: flex;
  align-items: flex-end;
  height: 98px;
`;

const WatermarkWord = styled.span<{ $size: number; $cjk?: boolean }>`
  width: 98px;
  font-family: ${(p) => (p.$cjk ? '"Noto Sans CJK SC"' : '"Liberation Sans"')}, sans-serif;
  font-size: ${(p) => p.$size}px;
  font-weight: 700;
  line-height: 56px;
  -webkit-text-stroke: 5px #cfcfcf;
  paint-order: stroke fill;
  text-shadow: none;
`;

const PawText = styled.text`
  font-family: "Liberation Sans", sans-serif;
  font-size: 38px;
  font-weight: 700;
  text-anchor: middle;
  text-shadow: none;
`;

const WatermarkUrl = styled.span`
  padding-left: 4px;
  font-family: "Noto Sans", sans-serif;
  font-size: 33px;
  line-height: 44px;
`;

/* ---------- icons ---------- */

const Icon = ({ size = 16, d, children }: { size?: number; d?: string; children?: React.ReactNode }) => (
  <Svg width={size} height={size} viewBox={`0 0 ${size} ${size}`} aria-hidden="true">
    {d && <path d={d} />}
    {children}
  </Svg>
);

const O = ({ d, fill }: { d: string; fill?: boolean }) => <path d={d} stroke={ORANGE} fill={fill ? PALE : 'none'} />;

const big: Record<string, React.ReactNode> = {
  newSlide: <><path d="M12 3.5H25.5V22.5H3.5V14M10 10H21M13 17H21M7 16H9.5V18.5H7Z" /><path d="M8 2V12M3 7H13" stroke={ORANGE} strokeWidth="1.5" /></>,
  table: <><path d="M3 7.5H24M3 13.5H24M3 18.5H24M10 3V22M17 7.5V22" stroke={ORANGE} /><path d="M2.5 3.5H24.5V22.5H2.5Z" /></>,
  picture: <><O fill d="M2.5 18L10 10L22 22.5H2.5Z" /><circle cx="19" cy="9" r="2.5" stroke={ORANGE} /><path d="M1.5 3.5H24.5V22.5H1.5Z" /></>,
  crop: <><path d="M3.5 1V7M.5 4H7" strokeWidth="1.5" /><path d="M8 3.5H22M22 4V13M3.5 8V20M4 21.5H10" strokeDasharray="3 2" /><path d="M12 13L22 20M23 13L13 20" stroke={ORANGE} /><circle cx="12" cy="21" r="2.5" stroke={ORANGE} /><circle cx="23" cy="21" r="2.5" stroke={ORANGE} /></>,
  shapes: <><path d="M0 1.5H15.5V16.5H0Z" /><circle cx="17" cy="16" r="8" stroke="#e07c50" fill="#b9b0ac" /></>,
  library: <><path d="M2.5 2V23.5H24" /><O d="M9.5 3L14 10.5H5ZM17 3.5H23.5V10.5H17ZM9.5 13L14 17.5L9.5 22L5 17.5Z" /><circle cx="20.5" cy="17.5" r="3.5" stroke={ORANGE} /></>,
  flow: <><path d="M6.5 9V20Q6.5 21.5 8 21.5H13" strokeWidth="1.5" /><path d="M12 5.5H20Q22.5 5.5 22.5 8V14" strokeDasharray="3 2" stroke="#888" /><O fill d="M7 1.5L12.5 5.5L7 9.5L1.5 5.5Z" /><rect x="13.5" y="16.5" width="12" height="9" rx="3" stroke={ORANGE} fill={PALE} /></>,
  mind: <><path d="M6 7Q8 4.5 15 4.5M6 18Q8 21.5 15 21.5" strokeWidth="1.5" /><circle cx="7" cy="13" r="6" stroke={ORANGE} fill={PALE} /><rect x="15.5" y=".5" width="9" height="8" rx="3" stroke={ORANGE} fill={PALE} /><rect x="15.5" y="17.5" width="9" height="8" rx="3" stroke={ORANGE} fill={PALE} /></>,
  geometry: <><O d="M16 2L25 18.5H7Z" /><circle cx="9" cy="17" r="7" /></>,
  more: <g fill="#888" stroke="none"><circle cx="6" cy="13" r="2" /><circle cx="13" cy="13" r="2" /><circle cx="20" cy="13" r="2" /></g>,
  comment: <><path d="M13 3.5H22.5Q24.5 3.5 24.5 6V19L20 23.5H4Q2.5 23.5 2.5 22V14M15 10.5H20M9 15.5H20" /><path d="M24.5 18.5H19.5V23.5Z" fill={INK} /><O d="M6 1V11M1 6H11M2.5 2.5L9.5 9.5M9.5 2.5L2.5 9.5" /></>,
  textbox: <><O fill d="M4 4H23V22H4Z" /><g stroke={ORANGE} fill="#f4f4f4"><path d="M2.5 2.5H5.5V5.5H2.5ZM21.5 2.5H24.5V5.5H21.5ZM2.5 20.5H5.5V23.5H2.5ZM21.5 20.5H24.5V23.5H21.5Z" /></g><path d="M6.5 16L10 8L13.5 16M8 13H12" strokeWidth="1.5" /><path d="M16 8.5H21M16 12H21M16 15.5H21" stroke={ORANGE} /></>,
  header: <><path d="M3.5 4Q3.5 2.5 5 2.5H20L23.5 6V22Q23.5 24.5 21.5 24.5H5Q3.5 24.5 3.5 23Z" /><path d="M19 2.5V6.5H23.5Z" fill={INK} /><O fill d="M6.5 5H17V8.5H6.5ZM6.5 19H21V22.5H6.5Z" /></>,
  wordart: <><path d="M4 19L11 2H15L22 19H18L16.5 15H9.5L8 19ZM10.5 12H15.5L13 6Z" /><path d="M4 21.5H22M6 24H20" stroke={ORANGE} strokeWidth="1.5" /></>,
  object: <><path d="M8 11V3Q8 1.5 9.5 1.5H22L24.5 4V17Q24.5 18.5 23 18.5H18" strokeWidth="1.3" /><path d="M1.5 11.5H16.5V24.5H1.5Z" fill={PALE} stroke={ORANGE} /><path d="M1.5 11.5H16.5V16.5H1.5Z" fill="#f4f4f4" /><path d="M1.5 11.5V24M16.5 11.5V24" /></>,
  omega: <path d="M2 23.5H9Q9 21 7 19C0 12 4 2 13 2C22 2 26 12 19 19Q17 21 17 23.5H24" strokeWidth="1.4" />,
  pi: <path d="M1 7Q2 3.5 5 3.5H25M8 3.5Q9 19 2 24M19 3.5V20Q19 24 24 23" strokeWidth="1.4" />,
  video: <><path d="M1.5 3.5H24.5V23.5H1.5Z" /><path d="M5 7V20M21 7V20" strokeDasharray="2 3" strokeWidth="2" /><O fill d="M10 8.5L17 13.5L10 18.5Z" /></>,
  audio: <><path d="M1.5 7.5H6L14 2V24L6 18.5H1.5Z" /><O d="M17 8.5Q20.5 13 17 18M20 4Q26.5 13 20 22.5" /></>,
  record: <><path d="M1.5 3.5H22.5V19.5H1.5ZM12 19.5V23M7 23.5H15" /><circle cx="19" cy="17" r="6.5" stroke={ORANGE} fill="#f4f4f4" /><circle cx="19" cy="17" r="3" stroke={ORANGE} /></>,
  clip: <path d="M8 15L16 7Q19 5 21 7.5Q22 10 20 12L10 21.5Q6 24.5 3 21.5Q.5 18 3.5 14.5L15 3.5Q19.5 0 23 3.5Q26.5 7.5 23 11.5L13 21M17 11L9 18.5Q7 19 7 17Q7 16 8 15" strokeWidth="1.3" />,
  link: <path d="M11 13L4 7.5Q0 3 5 1Q8 0 10 2L15 7.5Q18 12 13 14M15 11Q9 10 11 15L17 23Q21 27 24 23Q27 20 23 16L20 13" strokeWidth="1.5" />,
  mouse: <path d="M13 .5Q10 3 13 6M6.5 13Q6.5 6.5 13 6.5T19.5 13V18Q19.5 25 13 25T6.5 18ZM6.5 13.5H19.5M13 6.5V13.5" strokeWidth="1.3" />,
};

const small: Record<string, React.ReactNode> = {
  smart: <><O fill d="M.5 .5L6 3L13.5 .5V6H5.5V10L.5 12Z" /><path d="M5.5 6.5H15.5V15.5H5.5ZM8 9.5H9.5V13.5M12.5 9V13.5" fill="#f4f4f4" /></>,
  relation: <><path d="M2 11Q1.5 6 5 4M14 11Q14.5 6 11 4M5 15Q8 16 11 15" /><circle cx="8" cy="3" r="2.5" stroke={ORANGE} fill={PALE} /><circle cx="3" cy="13" r="2.2" stroke={ORANGE} fill={PALE} /><circle cx="13" cy="13" r="2.2" stroke={ORANGE} fill={PALE} /></>,
  chart: <path d="M.5 9.5H4.5V15.5H.5ZM5.5 5.5H9.5V15.5H5.5ZM10.5 .5H14.5V15.5H10.5Z" />,
  online: <><path d="M.5 9.5H4.5V15.5H.5ZM5.5 .5H9.5V15.5H5.5ZM10.5 4.5H14.5V9" /><circle cx="12" cy="12" r="4" fill={PALE} stroke={ORANGE} /><path d="M8 12H16M12 8V16" stroke={ORANGE} /></>,
  number: <><path d="M.5 1.5H12L15.5 5V14.5H.5ZM12 2.5V6H15.5" /><path d="M5 7.5H11M5 10H11M7 5.5V12M9.5 5.5V12" stroke={ORANGE} /></>,
  date: <><path d="M.5 2.5H15.5V15.5H.5ZM4 .5V4M12 .5V4M1 6H15" /><path d="M3.5 9.5H12.5M3.5 12.5H12.5" stroke={ORANGE} strokeDasharray="3 2" /></>,
};

/* ---------- pieces ---------- */

const Tool = ({ icon, label, w, caret, dim }: { icon: string; label: string; w: number; caret?: boolean; dim?: boolean }) => (
  <ToolButton $w={w} $dim={dim} disabled={dim}>
    <Icon size={26}>{big[icon]}</Icon>
    <ToolLabel>{label}{caret && <Caret />}</ToolLabel>
  </ToolButton>
);

const SmallTool = ({ icon, label }: { icon: string; label: string }) => (
  <SmallButton>
    <Icon size={16}>{small[icon]}</Icon>
    {label}
  </SmallButton>
);

const Shape = ({ glyph, label, on }: { glyph: Glyph; label: string; on?: boolean }) => (
  <ShapeCell $on={on} aria-label={label}>
    <GlyphSvg width="18" height="18" viewBox="0 0 18 18">
      {glyph.f && <path d={glyph.f} fill="#b9c9ea" stroke="none" />}
      <path d={glyph.d} />
      {glyph.t && <GlyphText x="9" y="12">{glyph.t}</GlyphText>}
    </GlyphSvg>
    {on && <Highlight $inset="-11px -7px -5px -6px" $b={3} />}
  </ShapeCell>
);

const tabs = ['开始', '插入', '设计', '切换', '动画', '幻灯片放映', '审阅', '视图', '开发工具', '特色功能', '畅言备课精灵'];

const quick = [
  { label: '保存', d: 'M1.5 14.5V3.5Q1.5 1.5 3.5 1.5H12L14.5 4V14.5ZM4.5 14V8.5H11.5V14M5 4.5H11' },
  { label: '输出', d: 'M1 4.5H7M5 1.5L8 4.5L5 7.5M8 1.5H10Q14.5 2 14.5 6T10 10.5H7Q3 10.5 3 12.5T6 14.5M7 10.5V6.5' },
  { label: '打印', d: 'M4 5V1.5H12V5M4 11.5H1.5V5.5H14.5V11.5H12M4 9.5H12V14.5H4ZM11 7.5H13' },
  { label: '预览', d: 'M13.5 5V1.5H1.5V14.5H8M9.5 5A4 4 0 1 0 9.6 5M12 12L15.5 15' },
];

export default function App() {
  return (
    <Page>
      <GlobalStyle />
      <MenuBar>
        <FileButton>
          <Icon d="M0 3.5H15M0 8.5H15M0 13.5H15" />文件
          <Icon size={10} d="M1 3L5 7.5L9 3" />
        </FileButton>
        <Rule />
        <QuickTools>
          {quick.map((q) => <QuickButton key={q.label} aria-label={q.label}><Icon d={q.d} /></QuickButton>)}
          <QuickButton aria-label="撤销"><Icon d="M2 2V6.5H7M2 6.5Q8 1.5 12 5T8 14" /><Caret /></QuickButton>
          <QuickButton aria-label="恢复"><Svg width="14" height="16" opacity="0.45"><path d="M12.5 2V6.5H8M12.5 6.5Q7 1.5 3 5T6 14" /></Svg></QuickButton>
          <QuickButton aria-label="自定义"><Icon d="M5 6H12M5 9L8.5 12.5L12 9Z" /></QuickButton>
        </QuickTools>
        <Rule />
        <Tabs>
          {tabs.map((t) => <Tab key={t} $active={t === '插入'}>{t}</Tab>)}
        </Tabs>
        <Search>
          <Icon d="M6.5 1A5.5 5.5 0 1 0 6.6 1M10.5 10.5L15 15.5" />
          <SearchInput aria-label="查找" placeholder="查找" />
        </Search>
        <AccountTools>
          <AccountButton>
            <Icon d="M8 13.5H4Q.5 13 1 9.5Q1.5 7 4 7Q4 2 9 2T14 6.5Q16 7 16 9"><circle cx="13" cy="12" r="3.5" fill="#8b9bbd" stroke="none" /><path d="M11 12H15" stroke="#fff" /></Icon>未同步
          </AccountButton>
          <AccountButton>
            <Icon d="M7 1.5A3 3 0 1 0 7.1 1.5M5 7.5Q.5 8 1.5 13.5H12M9 7.5L11 8M13 6V12M10 9H16" />协作
          </AccountButton>
          <AccountButton>
            <Icon d="M1.5 7V14.5H14.5V9M4 11Q5 5.5 11 5M9 1.5L12.5 5L9 8.5" />分享
          </AccountButton>
          <Rule />
          <AccountButton aria-label="更多选项"><Icon size={6}><g fill={INK} stroke="none"><circle cx="3" cy="-2" r="1" /><circle cx="3" cy="3" r="1" /><circle cx="3" cy="8" r="1" /></g></Icon></AccountButton>
          <AccountButton aria-label="收起功能区"><Icon d="M1 11L8 4.5L15 11" /></AccountButton>
        </AccountTools>
      </MenuBar>

      <Ribbon>
        <Group><Tool icon="newSlide" label="新建幻灯片" w={92} caret /></Group>
        <Group><Tool icon="table" label="表格" w={50} caret /></Group>
        <Group $pad={4}>
          <Tool icon="picture" label="图片" w={43} caret />
          <Tool icon="crop" label="截屏" w={43} caret />
          <ShapeAnchor>
            <Tool icon="shapes" label="形状" w={42} caret />
            <Highlight $inset="-4px -10px -4px -10px" $b={4} />
            <ShapeMenu>
              <MenuTitle>预设</MenuTitle>
              <SectionList>
                {sections.map((s) => (
                  <section key={s.title}>
                    <SectionTitle>{s.title}</SectionTitle>
                    <ShapeGrid>
                      {s.shapes.map((glyph, i) => (
                        <Shape key={`${s.title}${i}`} glyph={glyph} label={`${s.title} ${i + 1}`} on={s.title === '矩形' && i === 1} />
                      ))}
                    </ShapeGrid>
                  </section>
                ))}
              </SectionList>
            </ShapeMenu>
          </ShapeAnchor>
          <Tool icon="library" label="图标库" w={51} />
          <SmallColumn $w={78}><SmallTool icon="smart" label="智能图形" /><SmallTool icon="relation" label="关系图" /></SmallColumn>
          <SmallColumn $w={73}><SmallTool icon="chart" label="图表" /><SmallTool icon="online" label="在线图表" /></SmallColumn>
        </Group>
        <Group $pad={3}>
          <Tool icon="flow" label="流程图" w={58} caret />
          <Tool icon="mind" label="思维导图" w={67} caret />
          <Tool icon="geometry" label="几何图" w={48} />
          <Tool icon="more" label="更多" w={43} caret />
        </Group>
        <Group><Tool icon="comment" label="批注" w={41} /></Group>
        <Group $pad={3}>
          <Tool icon="textbox" label="文本框" w={60} caret />
          <Tool icon="header" label="页眉和页脚" w={70} />
          <Tool icon="wordart" label="艺术字" w={57} caret />
          <Tool icon="object" label="对象" w={37} />
          <SmallColumn $w={88}><SmallTool icon="number" label="幻灯片编号" /><SmallTool icon="date" label="日期和时间" /></SmallColumn>
        </Group>
        <Group $pad={4}>
          <Tool icon="omega" label="符号" w={43} caret />
          <Tool icon="pi" label="公式" w={42} caret />
        </Group>
        <Group $pad={4}>
          <Tool icon="video" label="视频" w={43} caret />
          <Tool icon="audio" label="音频" w={43} caret />
          <Tool icon="record" label="屏幕录制" w={58} />
        </Group>
        <Group $pad={2}>
          <Tool icon="clip" label="附件" w={40} />
          <Tool icon="link" label="超链接" w={50} caret dim />
          <Tool icon="mouse" label="动作" w={40} dim />
        </Group>
      </Ribbon>

      <Workspace>
        <Outline>
          <OutlineHead>
            <QuickButton aria-label="收起窗格"><Icon size={12} d="M5.5 1L1 6L5.5 11M11 1L6.5 6L11 11" /></QuickButton>
            <OutlineTab $gap={69}>大纲</OutlineTab>
            <OutlineTab $gap={12} $on>幻灯片</OutlineTab>
          </OutlineHead>
          <SlideList>
            <SlideItem>
              <SlideNumber>
                1
                <Svg width="11" height="11" viewBox="0 0 11 11"><path d={star(5, 5, 2, 6, 5)} fill={INK} stroke="none" /><path d="M-1 3H1M-1 6H1M-1 9H1" stroke="#999" /></Svg>
              </SlideNumber>
              <Thumb aria-label="幻灯片 1">
                <Donut width="46" height="46" viewBox="0 0 46 46">
                  <circle cx="23" cy="23" r="18" stroke="#d9d9d9" strokeWidth="9" />
                  <circle cx="23" cy="23" r="18" stroke="#6196e6" strokeWidth="9" pathLength="100" strokeDasharray="70 30" transform="rotate(-54 23 23)" />
                </Donut>
              </Thumb>
            </SlideItem>
            <SlideItem>
              <SlideNumber $on>2</SlideNumber>
              <Thumb $on aria-label="幻灯片 2"><ThumbBar /></Thumb>
            </SlideItem>
          </SlideList>
          <AddSlide aria-label="新建幻灯片"><Svg width="18" height="18"><path d="M9 1V17M1 9H17" strokeWidth="2" /></Svg></AddSlide>
        </Outline>

        <Editor>
          <StageRow>
            <Stage>
              <SlideCanvas>
                <SlideShape />
                <Pointer width="90" height="90" viewBox="0 0 90 90" aria-hidden="true">
                  <path d="M88 1L26 73L30 79L2 88L10 61L15 65Z" fill="#fb1010" />
                </Pointer>
              </SlideCanvas>
            </Stage>
            <ScrollBar>
              <Caret $up />
              <ScrollThumb />
              <Svg width="8" height="54" viewBox="0 0 8 54">
                <g fill="#888" stroke="none">
                  <path d="M1 2H7L4 5.5ZM1 19L4 16L7 19ZM1 23L4 20L7 23ZM1 36H7L4 39ZM1 40H7L4 43Z" />
                </g>
              </Svg>
            </ScrollBar>
          </StageRow>
          <Notes>
            <Icon size={18} d="M1 3.5H17M1 9.5H17M1 15.5H9M14 12V18M11 15H17" />
            <NotesInput aria-label="备注" placeholder="单击此处添加备注" />
          </Notes>
        </Editor>

        <SideBar>
          <SideHandle />
          <SideButton aria-label="文本"><Icon size={18} d="M2.5 5.5V2.5H15.5V5.5M9 2.5V15.5M5.5 15.5H12.5" /></SideButton>
          <SideButton aria-label="提示"><Svg width="18" height="18" opacity="0.45"><path d="M6 13Q2 10 2.5 7A6.5 6.5 0 0 1 15.5 7Q16 10 12 13ZM5.5 8L8 6.5L10 8L12.5 6.5M6 15.5H12M7.5 17.5H10.5" /></Svg></SideButton>
          <SideButton aria-label="设置"><Svg width="18" height="18"><path d="M5 4.5H17.5M1 13.5H10.5M15 13.5H17.5" /><circle cx="3" cy="4.5" r="2" /><circle cx="12.5" cy="13.5" r="2" /></Svg></SideButton>
          <SideButton aria-label="动画"><Svg width="18" height="18"><path d={star(5, 7, 3.4, 10.5, 8)} /><path d="M1 11L4 8M2 16.5L6 12.5M9 17L12 14" /></Svg></SideButton>
          <SideButton aria-label="切换"><Svg width="18" height="18"><path d="M13 1.5H1.5V15.5H9M7 13L9.5 15.5L7 18M4.5 10V4.5H17.5V15.5H13" /></Svg></SideButton>
          <SideButton aria-label="帮助"><Svg width="18" height="18"><circle cx="9" cy="9" r="8" /><path d="M6 7Q6 4 9 4T12 7Q12 8.5 9 10V11.5M9 12.5V14" /></Svg></SideButton>
          <SideMore aria-label="更多"><Svg width="18" height="6"><circle cx="3" cy="3" r="1.5" /><circle cx="9" cy="3" r="1.5" /><circle cx="15" cy="3" r="1.5" /></Svg></SideMore>
        </SideBar>
      </Workspace>

      <StatusBar>
        <StatusText>幻灯片 2 / 2</StatusText>
        <StatusText>Office 主题</StatusText>
        <Beautify>
          <Icon d="M1.5 5V12L8 15.5L14.5 12V5M1.5 5L8 8.5L14.5 5M8 8.5V10M4 3.5L8 .5L12 3.5L8 5.5Z" />
          一键美化<Caret $up />
        </Beautify>
        <ViewTools>
          <ViewButton aria-label="备注"><Icon size={18} d="M1 4H9M1 9.5H17M1 15H17M11 2L14 5L17 2" /><Caret /></ViewButton>
          <ViewButton $on aria-label="普通视图"><Icon d="M.5 1.5H15.5V14.5H.5ZM4.5 1.5V14.5M4.5 11H15.5M7.5 1.5V11" /></ViewButton>
          <ViewButton aria-label="浏览视图"><Icon d="M1.5 1.5H6.5V6.5H1.5ZM9.5 1.5H14.5V6.5H9.5ZM1.5 9.5H6.5V14.5H1.5ZM9.5 9.5H14.5V14.5H9.5Z" /></ViewButton>
          <ViewButton aria-label="阅读视图"><Icon d="M8 3V15.5M8 3Q5 1 .5 2V13.5Q6 13 8 15.5Q10 13 15.5 13.5V2Q11 1 8 3" /></ViewButton>
          <PlayGroup>
            <PlayButton aria-label="放映"><Svg width="12" height="14"><path d="M1 1L11 7L1 13Z" fill="#fff" stroke="none" /></Svg></PlayButton>
            <Caret />
          </PlayGroup>
          <ViewButton>83%<Caret /></ViewButton>
          <ViewButton aria-label="缩小"><Svg width="12" height="12"><path d="M1 6H11" strokeWidth="2" /></Svg></ViewButton>
          <ZoomRange type="range" aria-label="缩放" min={0} max={100} defaultValue={42} />
          <ViewButton aria-label="放大"><Svg width="12" height="12"><path d="M1 6H11M6 1V11" strokeWidth="2" /></Svg></ViewButton>
          <FitButton aria-label="适应窗口"><Icon d="M.5 4V.5H4M12 .5H15.5V4M15.5 12V15.5H12M4 15.5H.5V12M4.5 4.5H11.5V11.5H4.5Z" /></FitButton>
        </ViewTools>
      </StatusBar>

      <Watermark aria-hidden="true">
        <WatermarkLogo>
          <WatermarkWord $size={62}>Bai</WatermarkWord>
          <Svg width="88" height="98" viewBox="0 0 88 98">
            <g fill="#fff" stroke="#cfcfcf" strokeWidth="1.5">
              <ellipse cx="13" cy="41" rx="11" ry="14" />
              <ellipse cx="33" cy="20" rx="10" ry="15" />
              <ellipse cx="58" cy="22" rx="11" ry="14" />
              <ellipse cx="74" cy="46" rx="11" ry="14" />
              <path d="M42 42Q50 42 57 52Q61 60 70 66Q83 75 79 88Q74 97 61 97Q42 92 26 96Q12 98 8 87Q4 74 15 66Q24 59 29 50Q35 42 42 42Z" />
              <PawText x="43" y="87" strokeWidth="2">du</PawText>
            </g>
          </Svg>
          <WatermarkWord $size={48} $cjk>经验</WatermarkWord>
        </WatermarkLogo>
        <WatermarkUrl>jingyan.baidu.com</WatermarkUrl>
      </Watermark>

      <Toast>
        精彩内容更新<ToastBadge>N</ToastBadge>
        <ToastClose aria-label="关闭"><Svg width="12" height="12" opacity="0.5"><path d="M2 2L10 10M10 2L2 10" /></Svg></ToastClose>
        <ToastDot />
      </Toast>
      <Gauge />
    </Page>
  );
}
